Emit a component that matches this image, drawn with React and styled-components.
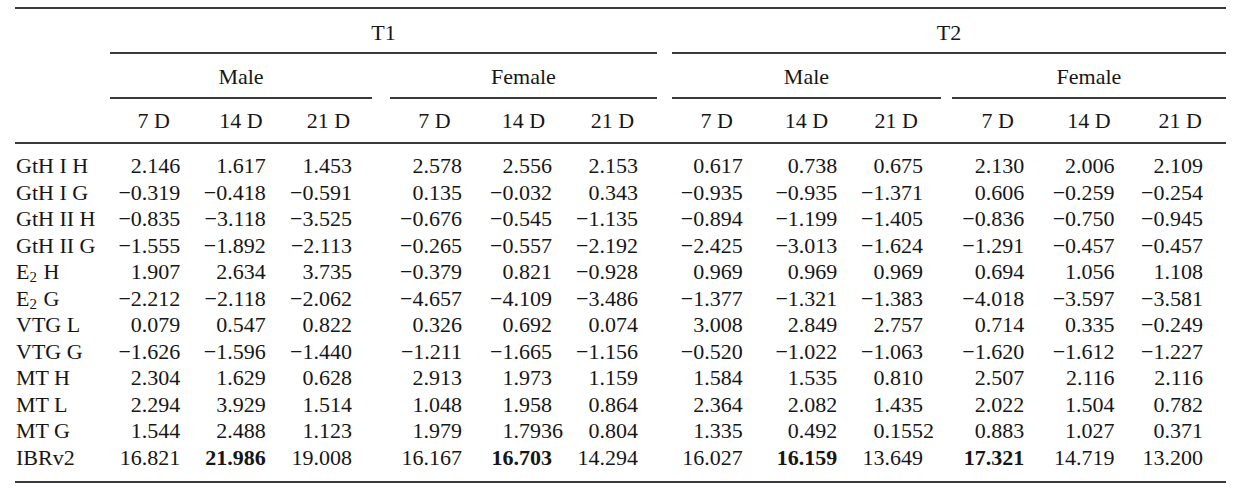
import React from "react";
import styled, { createGlobalStyle } from "styled-components";

const GlobalStyle = createGlobalStyle`
  html, body {
    margin: 0;
    padding: 0;
    background: #ffffff;
  }
  body {
    font-family: "Liberation Serif", "Times New Roman", serif;
    color: #161616;
  }
`;

const COLS =
  "95px repeat(3, 87.33px) 18px repeat(3, 89px) 15px repeat(3, 89.67px) 11px repeat(3, 91.33px)";

const Table = styled.div`
  width: 1211px;
  margin: 7px 0 0 15px;
  border-top: 2px solid #3a3a3a;
  border-bottom: 2px solid #3a3a3a;
  font-size: 22px;
  line-height: 26.6px;
`;

const Row = styled.div`
  display: grid;
  grid-template-columns: ${COLS};
  padding: ${(p) => p.$pad || "0"};
  border-bottom: ${(p) => (p.$rule ? "2px solid #3a3a3a" : "none")};
`;

const GroupRow = styled.div`
  display: grid;
  grid-template-columns: ${COLS};
`;

const SpanCell = styled.div`
  grid-column: ${(p) => p.$span};
  text-align: center;
  padding: ${(p) => p.$pad};
  border-bottom: 2px solid #3a3a3a;
`;

const HeadCell = styled.div`
  text-align: center;
  white-space: nowrap;
`;

const Body = styled.div`
  padding: 9.2px 0 9.5px;
`;

const DataRow = styled.div`
  display: grid;
  grid-template-columns: ${COLS};
  height: 26.56px;
  line-height: 26.56px;
`;

const Label = styled.div`
  padding-left: 1px;
  white-space: nowrap;
`;

const Num = styled.div`
  text-align: right;
  white-space: nowrap;
  padding-right: ${(p) => p.$pr}px;
  font-weight: ${(p) => (p.$bold ? 700 : 400)};
`;

const Overhang = styled.span`
  margin-right: -11px;
`;

const Spacer = styled.div``;

const Sub = styled.sub`
  font-size: 0.68em;
  line-height: 0;
  vertical-align: -0.22em;
  margin-right: 1px;
`;

const PADS = [17, 19, 20, 17, 16, 19, 19, 14, 18, 19, 20, 23];

const ROWS = [
  [["GtH I H"], "2.146 1.617 1.453 2.578 2.556 2.153 0.617 0.738 0.675 2.130 2.006 2.109"],
  [["GtH I G"], "−0.319 −0.418 −0.591 0.135 −0.032 0.343 −0.935 −0.935 −1.371 0.606 −0.259 −0.254"],
  [["GtH II H"], "−0.835 −3.118 −3.525 −0.676 −0.545 −1.135 −0.894 −1.199 −1.405 −0.836 −0.750 −0.945"],
  [["GtH II G"], "−1.555 −1.892 −2.113 −0.265 −0.557 −2.192 −2.425 −3.013 −1.624 −1.291 −0.457 −0.457"],
  [["E", "H"], "1.907 2.634 3.735 −0.379 0.821 −0.928 0.969 0.969 0.969 0.694 1.056 1.108"],
  [["E", "G"], "−2.212 −2.118 −2.062 −4.657 −4.109 −3.486 −1.377 −1.321 −1.383 −4.018 −3.597 −3.581"],
  [["VTG L"], "0.079 0.547 0.822 0.326 0.692 0.074 3.008 2.849 2.757 0.714 0.335 −0.249"],
  [["VTG G"], "−1.626 −1.596 −1.440 −1.211 −1.665 −1.156 −0.520 −1.022 −1.063 −1.620 −1.612 −1.227"],
  [["MT H"], "2.304 1.629 0.628 2.913 1.973 1.159 1.584 1.535 0.810 2.507 2.116 2.116"],
  [["MT L"], "2.294 3.929 1.514 1.048 1.958 0.864 2.364 2.082 1.435 2.022 1.504 0.782"],
  [["MT G"], "1.544 2.488 1.123 1.979 1.7936 0.804 1.335 0.492 0.1552 0.883 1.027 0.371"],
  [["IBRv2"], "16.821 *21.986 19.008 16.167 *16.703 14.294 16.027 *16.159 13.649 *17.321 14.719 13.200"],
];

const DAYS = ["7 D", "14 D", "21 D"];

function renderLabel(parts) {
  if (parts.length === 2) {
    return (
      <>
        {parts[0]}
        <Sub>2</Sub> {parts[1]}
      </>
    );
  }
  return parts[0];
}

function renderValue(raw) {
  const v = raw.replace("*", "");
  const [intPart, frac] = v.split(".");
  if (frac.length > 3) {
    return (
      <>
        {intPart}.{frac.slice(0, 3)}
        <Overhang>{frac.slice(3)}</Overhang>
      </>
    );
  }
  return v;
}

function Cells({ items, render }) {
  const out = [];
  items.forEach((item, i) => {
    out.push(render(item, i));
    if (i % 3 === 2 && i < items.length - 1) out.push(<Spacer key={`s${i}`} />);
  });
  return out;
}

export default function App() {
  const headers = [...DAYS, ...DAYS, ...DAYS, ...DAYS];
  return (
    <>
      <GlobalStyle />
      <Table>
        <GroupRow>
          <SpanCell $span="2 / 9" $pad="11px 0 5px">T1</SpanCell>
          <SpanCell $span="10 / 17" $pad="11px 0 5px">T2</SpanCell>
        </GroupRow>
        <GroupRow>
          <SpanCell $span="2 / 5" $pad="10px 0 7px">Male</SpanCell>
          <SpanCell $span="6 / 9" $pad="10px 0 7px">Female</SpanCell>
          <SpanCell $span="10 / 13" $pad="10px 0 7px">Male</SpanCell>
          <SpanCell $span="14 / 17" $pad="10px 0 7px">Female</SpanCell>
        </GroupRow>
        <Row $pad="9px 0 7px" $rule>
          <Spacer />
          <Cells items={headers} render={(h, i) => <HeadCell key={i}>{h}</HeadCell>} />
        </Row>
        <Body>
          {ROWS.map(([label, values], r) => (
            <DataRow key={r}>
              <Label>{renderLabel(label)}</Label>
              <Cells
                items={values.split(" ")}
                render={(v, i) => (
                  <Num key={i} $pr={PADS[i]} $bold={v.startsWith("*")}>
                    {renderValue(v)}
                  </Num>
                )}
              />
            </DataRow>
          ))}
        </Body>
      </Table>
    </>
  );
}
